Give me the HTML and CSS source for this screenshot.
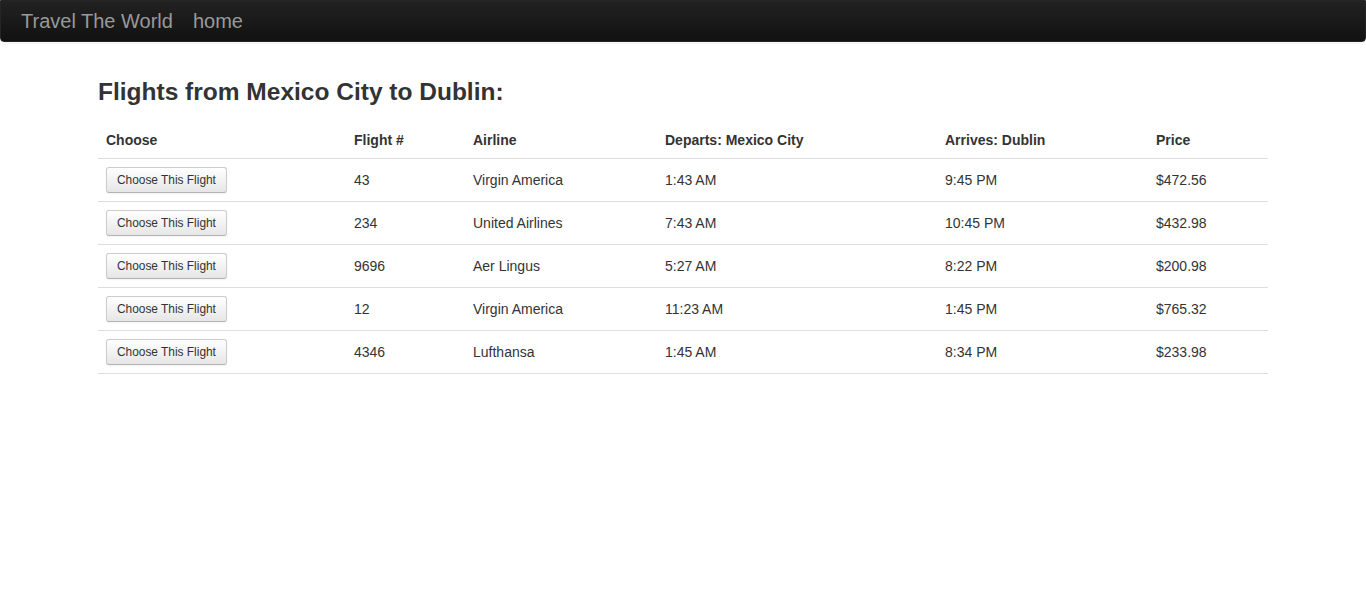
FILE: index.html
```html
<!DOCTYPE html>
<html lang="en">
<head>
<meta charset="utf-8">
<title>Travel The World</title>
<link rel="stylesheet" href="styles.css">
</head>
<body>
<nav class="navbar">
  <a class="brand" href="#">Travel The World</a>
  <a class="nav-link" href="#">home</a>
</nav>
<main class="container">
  <h3 class="title">Flights from Mexico City to Dublin:</h3>
  <table class="table">
    <colgroup>
      <col class="c1"><col class="c2"><col class="c3"><col class="c4"><col class="c5"><col class="c6">
    </colgroup>
    <thead>
      <tr><th>Choose</th><th>Flight #</th><th>Airline</th><th>Departs: Mexico City</th><th>Arrives: Dublin</th><th>Price</th></tr>
    </thead>
    <tbody>
      <tr><td><button class="btn">Choose This Flight</button></td><td>43</td><td>Virgin America</td><td>1:43 AM</td><td>9:45 PM</td><td>$472.56</td></tr>
      <tr><td><button class="btn">Choose This Flight</button></td><td>234</td><td>United Airlines</td><td>7:43 AM</td><td>10:45 PM</td><td>$432.98</td></tr>
      <tr><td><button class="btn">Choose This Flight</button></td><td>9696</td><td>Aer Lingus</td><td>5:27 AM</td><td>8:22 PM</td><td>$200.98</td></tr>
      <tr><td><button class="btn">Choose This Flight</button></td><td>12</td><td>Virgin America</td><td>11:23 AM</td><td>1:45 PM</td><td>$765.32</td></tr>
      <tr><td><button class="btn">Choose This Flight</button></td><td>4346</td><td>Lufthansa</td><td>1:45 AM</td><td>8:34 PM</td><td>$233.98</td></tr>
    </tbody>
  </table>
</main>
</body>
</html>
```
FILE: styles.css
```css
html, body {
  margin: 0;
  padding: 0;
}
body {
  font-family: "Liberation Sans", Arial, Helvetica, sans-serif;
  font-size: 14px;
  line-height: 20px;
  color: #333333;
  background: #ffffff;
}
.navbar {
  display: flex;
  align-items: center;
  height: 40px;
  background: linear-gradient(to bottom, #222222, #111111);
  border: 1px solid #252525;
  border-radius: 0 0 4px 4px;
  box-shadow: 0 1px 4px rgba(0, 0, 0, 0.065);
  padding: 0 0 0 20px;
  margin-bottom: 30px;
}
.navbar a {
  color: #999999;
  text-decoration: none;
  font-size: 20px;
  line-height: 20px;
}
.brand {
  margin-right: 20px;
}
.container {
  width: 1170px;
  margin: 0 auto;
}
.title {
  font-size: 24.5px;
  line-height: 40px;
  font-weight: bold;
  margin: 10px 0;
  color: #333333;
}
.table {
  width: 100%;
  border-collapse: collapse;
  border-spacing: 0;
  table-layout: fixed;
}
.c1 { width: 248px; }
.c2 { width: 119px; }
.c3 { width: 192px; }
.c4 { width: 280px; }
.c5 { width: 211px; }
.c6 { width: 120px; }
.table th, .table td {
  padding: 8px;
  text-align: left;
  vertical-align: middle;
  line-height: 20px;
}
.table th {
  font-weight: bold;
  vertical-align: bottom;
}
.table tbody td {
  border-top: 1px solid #dddddd;
}
.table tbody tr:last-child td {
  border-bottom: 1px solid #dddddd;
}
.btn {
  display: inline-block;
  font-family: "Liberation Sans", Arial, Helvetica, sans-serif;
  font-size: 11.9px;
  line-height: 20px;
  padding: 2px 10px;
  color: #333333;
  background: linear-gradient(to bottom, #ffffff, #e6e6e6);
  border: 1px solid #cccccc;
  border-bottom-color: #b3b3b3;
  border-radius: 3px;
  box-shadow: inset 0 1px 0 rgba(255, 255, 255, 0.2), 0 1px 2px rgba(0, 0, 0, 0.05);
  cursor: pointer;
  margin: 0;
}
```
